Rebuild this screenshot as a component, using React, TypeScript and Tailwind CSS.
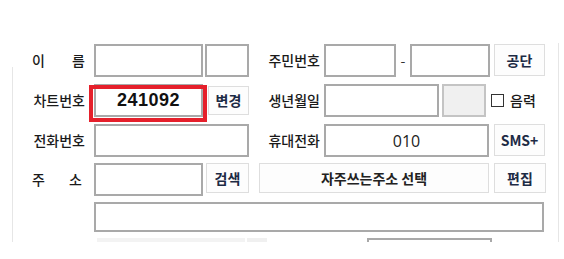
import React from 'react';

const font = { fontFamily: '"Noto Sans CJK KR", "Noto Sans", sans-serif' };

const Input = ({ className = '', children }: { className?: string; children?: React.ReactNode }) => (
  <div className={`h-full border-2 border-[#a9a9a9] bg-white flex items-center justify-center ${className}`}>
    {children}
  </div>
);

const Btn = ({ className = '', children }: { className?: string; children: React.ReactNode }) => (
  <div
    className={`flex items-center justify-center border border-[#dedede] bg-[#fdfdfd] text-[14px] font-bold text-[#1d2b45] ${className}`}
  >
    {children}
  </div>
);

const Label = ({ children, className = '' }: { children: React.ReactNode; className?: string }) => (
  <div className={`flex items-center justify-end text-[14px] font-medium text-[#1a1a1a] ${className}`}>{children}</div>
);

export default function App() {
  return (
    <div className="w-[564px] h-[259px] bg-white" style={font}>
      <div className="relative h-[242px] overflow-hidden pt-[44px]">
        <div className="absolute left-[12px] top-[67px] bottom-0 w-px bg-[#e6e6e6]" />
        <div className="absolute left-[558px] top-[43px] bottom-0 w-px bg-[#e6e6e6]" />

        {/* row 1 */}
        <div className="flex h-[33px]">
          <div className="w-[85px] flex justify-end">
            <div className="w-[53px] flex justify-between items-center text-[14px] font-medium text-[#1a1a1a]">
              <span>이</span>
              <span>름</span>
            </div>
          </div>
          <Input className="ml-[9px] w-[109px]" />
          <Input className="ml-[2px] w-[44px]" />
          <Label className="ml-[11px] w-[60px]">주민번호</Label>
          <Input className="ml-[4px] w-[72px]" />
          <div className="w-[14px] flex items-center justify-center text-[14px] text-[#333]">-</div>
          <Input className="w-[80px]" />
          <Btn className="ml-[4px] w-[51px] h-[32px]">공단</Btn>
        </div>

        {/* row 2 */}
        <div className="flex h-[33px] mt-[7px]">
          <Label className="w-[85px]">차트번호</Label>
          <div className="relative ml-[9px] w-[109px] h-full">
            <Input className="w-full">
              <span
                className="text-[18px] font-bold text-[#111] tracking-[0.5px]"
                style={{ fontFamily: '"Liberation Sans", Arial, sans-serif' }}
              >
                241092
              </span>
            </Input>
            <div className="absolute left-[-5px] top-[1px] w-[118px] h-[37px] border-4 border-[#e5202b]" />
          </div>
          <Btn className="ml-[5px] w-[41px] h-[29px] self-center">변경</Btn>
          <Label className="ml-[11px] w-[60px]">생년월일</Label>
          <Input className="ml-[4px] w-[115px]" />
          <div className="ml-[3px] w-[44px] h-full border-2 border-[#c4c4c4] bg-[#f0f0f0]" />
          <div className="ml-[5px] self-center w-[13px] h-[13px] border border-[#333] bg-white" />
          <div className="ml-[6px] flex items-center text-[14px] font-medium text-[#1a1a1a]">음력</div>
        </div>

        {/* row 3 */}
        <div className="flex h-[33px] mt-[7px]">
          <Label className="w-[85px]">전화번호</Label>
          <Input className="ml-[9px] w-[155px]" />
          <Label className="ml-[11px] w-[60px]">휴대전화</Label>
          <Input className="ml-[4px] w-[165px]">
            <span className="text-[16px] text-[#222]" style={{ fontFamily: '"Open Sans", sans-serif' }}>
              010
            </span>
          </Input>
          <Btn className="ml-[5px] w-[51px] h-[32px] text-[13px]">SMS+</Btn>
        </div>

        {/* row 4 */}
        <div className="flex h-[33px] mt-[6px]">
          <div className="w-[85px] flex justify-end">
            <div className="w-[50px] mr-[3px] flex justify-between items-center text-[14px] font-medium text-[#1a1a1a]">
              <span>주</span>
              <span>소</span>
            </div>
          </div>
          <Input className="ml-[9px] w-[109px]" />
          <Btn className="ml-[3px] w-[43px] h-[30px]">검색</Btn>
          <Btn className="ml-[10px] w-[230px] h-[30px] text-[#222]">자주쓰는주소 선택</Btn>
          <Btn className="ml-[5px] w-[52px] h-[30px]">편집</Btn>
        </div>

        {/* row 5 */}
        <div className="flex h-[30px] mt-[6px]">
          <Input className="ml-[94px] w-[450px]" />
        </div>

        {/* row 6 (cut off) */}
        <div className="flex h-[20px] mt-[6px]">
          <div className="ml-[97px] w-[148px] h-full bg-[#f3f3f3]" />
          <div className="ml-[2px] w-[20px] h-full bg-[#f0f0f0]" />
          <div className="ml-[100px] w-[125px] h-full border-2 border-[#a9a9a9]" />
        </div>
      </div>
    </div>
  );
}
